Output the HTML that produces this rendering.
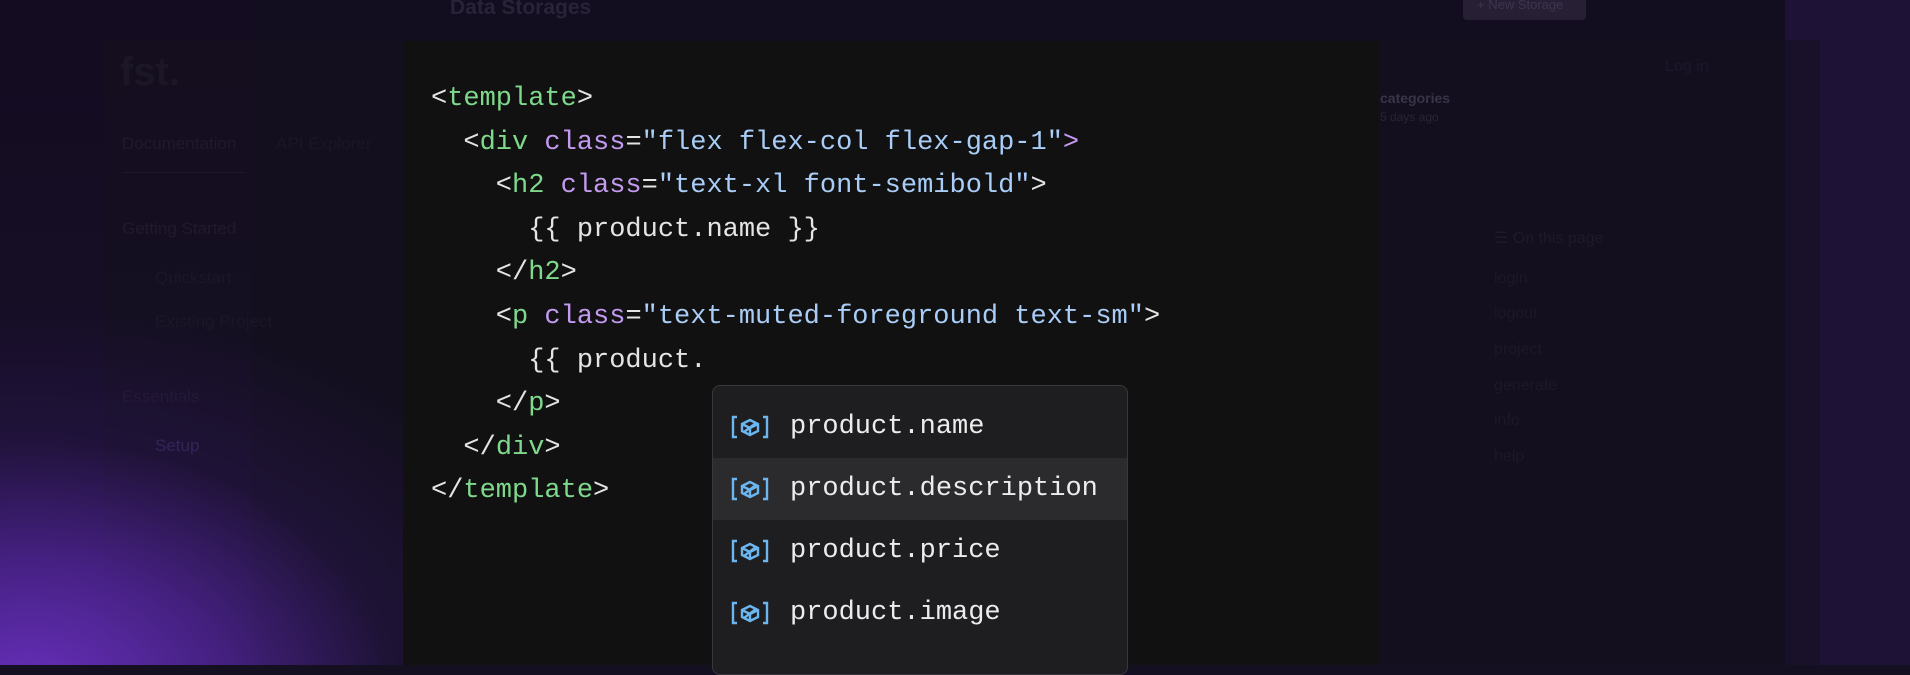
<!DOCTYPE html>
<html><head><meta charset="utf-8"><style>
*{margin:0;padding:0;box-sizing:border-box}
body{width:1910px;height:665px;overflow:hidden;position:relative;background:#150f22;font-family:"Liberation Sans",sans-serif}
.bg{position:absolute;inset:0;background:linear-gradient(180deg,#140c20 0%,#17102a 100%)}
.glow{position:absolute;inset:0;background:radial-gradient(ellipse 560px 400px at 30px 700px,rgba(110,50,200,0.95) 0%,rgba(85,38,160,0.75) 35%,rgba(50,25,95,0.35) 65%,rgba(21,15,34,0) 100%)}
.rightp{position:absolute;left:1785px;top:0;width:125px;height:665px;background:#1e1236}
.win1{position:absolute;left:252px;top:0;width:1533px;height:665px;background:rgba(19,14,31,0.9)}
.win2{position:absolute;left:104px;top:40px;width:1716px;height:625px;background:rgba(20,15,30,0.5)}
.faint{position:absolute;color:#201a2c;font-size:17px}
.code{position:absolute;left:403px;top:41px;width:976px;height:624px;background:#111112}
pre{position:absolute;left:431px;top:78px;font-family:"Liberation Mono",monospace;font-size:27px;line-height:43.6px;color:#e4e4e4}
.t{color:#7fd98c}.a{color:#c49af0}.s{color:#a9cdf6}
.dd{position:absolute;left:712px;top:385px;width:416px;height:290px;background:#1e1e20;border:1px solid #38383c;border-radius:8px;overflow:hidden;padding-top:10px}
.row{height:62px;display:flex;align-items:center;padding-left:18px;font-family:"Liberation Mono",monospace;font-size:27px;color:#ececec}
.row.h{background:#2b2b2e}
.row svg{margin-right:21px}
</style></head><body>
<div class="bg"></div>
<div class="rightp"></div>
<div class="win1"></div>
<div class="faint" style="left:450px;top:-4px;font-size:21px;font-weight:bold;color:#29233a">Data Storages</div>
<div style="position:absolute;left:1463px;top:-6px;width:123px;height:26px;background:#272034;border-radius:4px;color:#3e3450;font-size:13px;padding:3px 0 0 14px">+ New Storage</div>
<div class="win2"></div>
<div class="glow"></div>
<div class="faint" style="left:120px;top:50px;font-size:40px;font-weight:bold;color:#1c1726">fst.</div>
<div class="faint" style="left:122px;top:134px">Documentation</div>
<div class="faint" style="left:276px;top:134px;color:#1b1626">API Explorer</div>
<div style="position:absolute;left:122px;top:172px;width:124px;height:1px;background:#1e1829"></div>
<div class="faint" style="left:122px;top:219px">Getting Started</div>
<div class="faint" style="left:155px;top:268px;color:#1c1727">Quickstart</div>
<div class="faint" style="left:155px;top:312px;color:#1c1727">Existing Project</div>
<div class="faint" style="left:122px;top:387px;color:#231a36">Essentials</div>
<div class="faint" style="left:155px;top:436px;color:#33245a">Setup</div>
<div class="faint" style="left:1380px;top:90px;font-weight:bold;font-size:14px;color:#3a3448">categories</div>
<div class="faint" style="left:1380px;top:110px;font-size:12px;color:#2a2438">5 days ago</div>
<div class="faint" style="left:1494px;top:228px;font-size:16px;color:#1e1a2a">☰ On this page</div>
<div class="faint" style="left:1494px;top:270px;font-size:16px;color:#1c1828">login</div>
<div class="faint" style="left:1494px;top:305px;font-size:16px;color:#1c1828">logout</div>
<div class="faint" style="left:1494px;top:341px;font-size:16px;color:#1c1828">project</div>
<div class="faint" style="left:1494px;top:377px;font-size:16px;color:#1c1828">generate</div>
<div class="faint" style="left:1494px;top:412px;font-size:16px;color:#1c1828">info</div>
<div class="faint" style="left:1494px;top:448px;font-size:16px;color:#1c1828">help</div>
<div class="faint" style="left:1665px;top:58px;font-size:16px;color:#1c1630">Log in</div>
<div class="code"></div>
<pre>&lt;<span class="t">template</span>&gt;
  &lt;<span class="t">div</span> <span class="a">class</span>=<span class="s">"flex flex-col flex-gap-1"</span><span class="a">&gt;</span>
    &lt;<span class="t">h2</span> <span class="a">class</span>=<span class="s">"text-xl font-semibold"</span>&gt;
      {{ product.name }}
    &lt;/<span class="t">h2</span>&gt;
    &lt;<span class="t">p</span> <span class="a">class</span>=<span class="s">"text-muted-foreground text-sm"</span>&gt;
      {{ product.
    &lt;/<span class="t">p</span>&gt;
  &lt;/<span class="t">div</span>&gt;
&lt;/<span class="t">template</span>&gt;</pre>
<div class="dd">
<div class="row"><svg width="38" height="24" viewBox="0 0 38 24" fill="none" stroke="#6cb6f0" stroke-width="2.4"><path d="M6 2H2V22H6M32 2H36V22H32"/><path d="M11 9L19 5L27 9V16L19 20L11 16Z"/><path d="M11 9L19 13L27 9M19 13V20M13 17L25 8"/></svg>product.name</div>
<div class="row h"><svg width="38" height="24" viewBox="0 0 38 24" fill="none" stroke="#6cb6f0" stroke-width="2.4"><path d="M6 2H2V22H6M32 2H36V22H32"/><path d="M11 9L19 5L27 9V16L19 20L11 16Z"/><path d="M11 9L19 13L27 9M19 13V20M13 17L25 8"/></svg>product.description</div>
<div class="row"><svg width="38" height="24" viewBox="0 0 38 24" fill="none" stroke="#6cb6f0" stroke-width="2.4"><path d="M6 2H2V22H6M32 2H36V22H32"/><path d="M11 9L19 5L27 9V16L19 20L11 16Z"/><path d="M11 9L19 13L27 9M19 13V20M13 17L25 8"/></svg>product.price</div>
<div class="row"><svg width="38" height="24" viewBox="0 0 38 24" fill="none" stroke="#6cb6f0" stroke-width="2.4"><path d="M6 2H2V22H6M32 2H36V22H32"/><path d="M11 9L19 5L27 9V16L19 20L11 16Z"/><path d="M11 9L19 13L27 9M19 13V20M13 17L25 8"/></svg>product.image</div>
<div class="row"><svg width="38" height="24" viewBox="0 0 38 24"><path d="M12 20L19 14L26 20Z" fill="#b98ae8"/></svg></div>
</div>
</body></html>
